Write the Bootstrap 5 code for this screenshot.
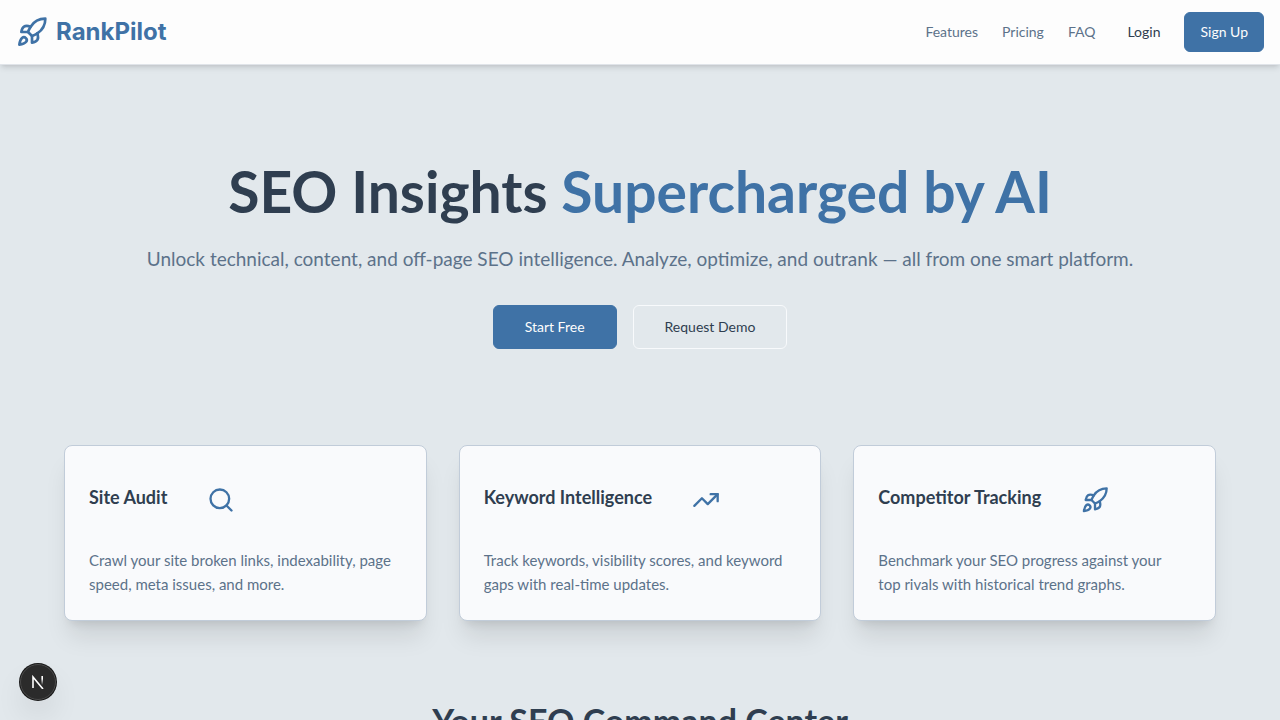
<!DOCTYPE html>
<html lang="en">
<head>
<meta charset="utf-8">
<meta name="viewport" content="width=device-width, initial-scale=1">
<title>RankPilot</title>
<link href="https://cdn.jsdelivr.net/npm/bootstrap@5.3.0/dist/css/bootstrap.min.css" rel="stylesheet">
<style>
  :root { --brand: #3f72a6; --ink: #2f3e50; --muted: #5c728a; --page: #e2e8ec; }
  body { background: var(--page); color: var(--ink); font-family: Lato, "Liberation Sans", sans-serif; font-size: 15px; line-height: 24px; overflow-x: hidden; }
  .topbar { background: #fdfdfd; border-bottom: 1px solid #e0e4e9; box-shadow: 0 4px 6px -1px rgba(0,0,0,.1), 0 2px 4px -2px rgba(0,0,0,.1); min-height: 65px; z-index: 10; }
  .brand-name { font-family: Inter, "Liberation Sans", sans-serif; font-weight: 700; font-size: 24px; line-height: 32px; }
  .brand-link, .brand-link:hover, .accent { color: var(--brand); }
  .menu-links { gap: 24px; }
  .menu-links a { color: var(--muted); font-size: 14px; line-height: 20px; }
  .btn { --bs-btn-font-size: 14px; --bs-btn-line-height: 20px; --bs-btn-border-radius: 6px; --bs-btn-color: var(--ink); }
  .btn-brand { --bs-btn-bg: var(--brand); --bs-btn-color: #fdfdfd; --bs-btn-border-color: var(--brand); --bs-btn-hover-bg: #35638f; --bs-btn-hover-color: #fff; }
  .btn-bar { --bs-btn-padding-x: 15px; --bs-btn-padding-y: 9px; }
  .btn-hero { --bs-btn-padding-x: 31px; --bs-btn-padding-y: 11px; }
  .btn-line { --bs-btn-border-color: #f8fafc; --bs-btn-hover-border-color: #fff; }
  .hero { padding: 96px 16px; }
  .hero h1 { font-size: 57px; line-height: 60px; font-weight: 700; margin-bottom: 24px; }
  .hero p { font-size: 19px; line-height: 28px; color: var(--muted); margin-bottom: 32px; }
  .features { max-width: 1184px; padding: 0 16px; }
  .features .row { --bs-gutter-x: 32px; --bs-gutter-y: 32px; }
  .feature { background: #f9fafc; border: 1px solid #c1ccd9; border-radius: 8px; box-shadow: 0 20px 25px -5px rgba(0,0,0,.1), 0 8px 10px -6px rgba(0,0,0,.1); padding: 40px 24px 24px; }
  .feature-head { gap: 40px; margin-bottom: 34px; }
  .feature h3 { font-size: 18px; line-height: 22px; font-weight: 700; margin: 0; }
  .feature p { color: var(--muted); margin: 0; }
  .center-title { font-size: 34px; line-height: 40px; font-weight: 700; margin: 80px 0; }
  .ico { fill: none; stroke: var(--brand); stroke-width: 2; stroke-linecap: round; stroke-linejoin: round; flex: none; }
  .dev-badge { left: 20px; bottom: 20px; width: 36px; height: 36px; background: #2b2b2b; border: 1px solid #4a4a4a; box-shadow: 0 0 0 1px #171717, 0 16px 32px -8px rgba(0,0,0,.24); }
</style>
</head>
<body>
<svg class="d-none" aria-hidden="true">
  <symbol id="rocket" viewBox="0 0 24 24"><path d="M4.5 16.5c-1.5 1.26-2 5-2 5s3.74-.5 5-2c.71-.84.7-2.13-.09-2.91a2.18 2.18 0 0 0-2.91-.09z"/><path d="m12 15-3-3a22 22 0 0 1 2-3.95A12.88 12.88 0 0 1 22 2c0 2.72-.78 7.5-6 11a22.35 22.35 0 0 1-4 2z"/><path d="M9 12H4s.55-3.03 2-4c1.62-1.08 5 0 5 0"/><path d="M12 15v5s3.03-.55 4-2c1.08-1.62 0-5 0-5"/></symbol>
</svg>
<header class="topbar sticky-top d-flex align-items-center justify-content-between px-3">
  <a class="brand-link d-flex align-items-center gap-2 text-decoration-none" href="#">
    <svg class="ico" width="32" height="32" aria-hidden="true"><use href="#rocket"/></svg>
    <span class="brand-name">RankPilot</span>
  </a>
  <nav class="d-flex align-items-center gap-3">
    <div class="menu-links d-flex">
      <a class="text-decoration-none" href="#features">Features</a>
      <a class="text-decoration-none" href="#pricing">Pricing</a>
      <a class="text-decoration-none" href="#faq">FAQ</a>
    </div>
    <div class="d-flex gap-2">
      <button type="button" class="btn btn-bar">Login</button>
      <button type="button" class="btn btn-bar btn-brand">Sign Up</button>
    </div>
  </nav>
</header>
<main>
  <section class="hero text-center">
    <h1>SEO Insights <span class="accent">Supercharged by AI</span></h1>
    <p>Unlock technical, content, and off-page SEO intelligence. Analyze, optimize, and outrank — all from one smart platform.</p>
    <div class="d-flex justify-content-center gap-3">
      <button type="button" class="btn btn-hero btn-brand">Start Free</button>
      <button type="button" class="btn btn-hero btn-line">Request Demo</button>
    </div>
  </section>
  <section class="features container-fluid" id="features">
    <div class="row row-cols-1 row-cols-md-3">
      <div class="col">
        <article class="feature h-100">
          <div class="feature-head d-flex"><h3>Site Audit</h3>
            <svg class="ico" width="28" height="28" viewBox="0 0 24 24" aria-hidden="true"><circle cx="11" cy="11" r="8"/><path d="m21 21-4.3-4.3"/></svg></div>
          <p class="pe-2">Crawl your site broken links, indexability, page speed, meta issues, and more.</p>
        </article>
      </div>
      <div class="col">
        <article class="feature h-100">
          <div class="feature-head d-flex"><h3>Keyword Intelligence</h3>
            <svg class="ico" width="28" height="28" viewBox="0 0 24 24" aria-hidden="true"><path d="m22 7-8.5 8.5-5-5L2 17"/><path d="M16 7h6v6"/></svg></div>
          <p class="pe-2">Track keywords, visibility scores, and keyword gaps with real-time updates.</p>
        </article>
      </div>
      <div class="col">
        <article class="feature h-100">
          <div class="feature-head d-flex"><h3>Competitor Tracking</h3>
            <svg class="ico" width="28" height="28" aria-hidden="true"><use href="#rocket"/></svg></div>
          <p class="pe-2">Benchmark your SEO progress against your top rivals with historical trend graphs.</p>
        </article>
      </div>
    </div>
  </section>
  <h2 class="center-title text-center">Your SEO Command Center</h2>
</main>
<button type="button" class="dev-badge position-fixed rounded-circle p-0 d-flex align-items-center justify-content-center" aria-label="Open developer tools">
  <svg width="14" height="14" viewBox="0 0 14 14" fill="none" aria-hidden="true">
    <defs><linearGradient id="fade" x1="0" y1="0" x2="0" y2="1"><stop offset=".3" stop-color="#fff"/><stop offset="1" stop-color="#fff" stop-opacity="0"/></linearGradient></defs>
    <path d="M2 13V2l10 12" stroke="#fff" stroke-width="1.6"/><rect x="10.4" y="1" width="1.6" height="9" fill="url(#fade)"/>
  </svg>
</button>
<script src="https://cdn.jsdelivr.net/npm/bootstrap@5.3.0/dist/js/bootstrap.bundle.min.js"></script>
</body>
</html>
